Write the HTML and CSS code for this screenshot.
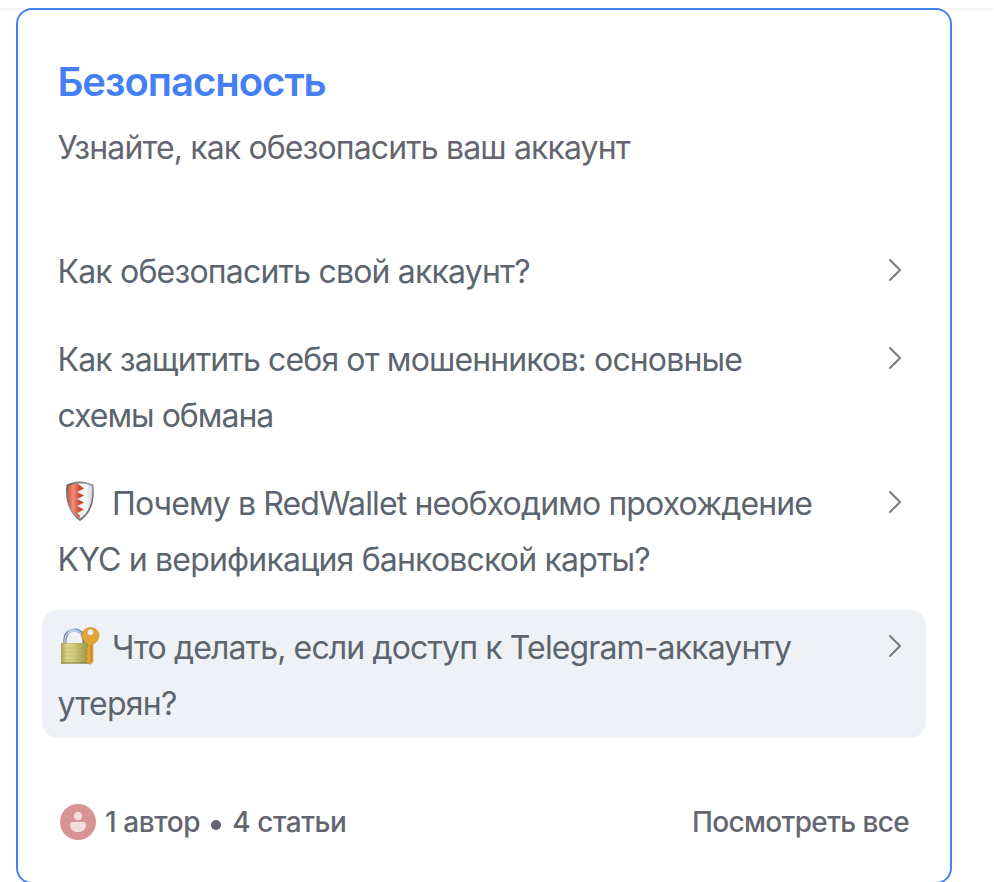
FILE: index.html
```html
<!DOCTYPE html>
<html lang="ru">
<head>
<meta charset="utf-8">
<title>Безопасность</title>
<link rel="stylesheet" href="styles.css">
</head>
<body>
<div class="topbar"></div>
<main class="card">
  <h1 class="title">Безопасность</h1>
  <p class="subtitle">Узнайте, как обезопасить ваш аккаунт</p>
  <ul class="list">
    <li class="item"><span class="label"><span class="line l1">Как обезопасить свой аккаунт?</span></span>
      <svg class="chevron" viewBox="0 0 16 24"><path d="M2 2 12 12 2 22"/></svg></li>
    <li class="item"><span class="label"><span class="line l2">Как защитить себя от мошенников: основные</span> <span class="line l3">схемы обмана</span></span>
      <svg class="chevron" viewBox="0 0 16 24"><path d="M2 2 12 12 2 22"/></svg></li>
    <li class="item"><span class="label"><span class="line"><svg class="emoji" viewBox="0 0 42 42">
        <defs>
          <linearGradient id="rim" x1="0" x2="1" y1="0" y2="1"><stop offset="0" stop-color="#555"/><stop offset=".45" stop-color="#999"/><stop offset="1" stop-color="#555"/></linearGradient>
          <linearGradient id="red" x1="0" x2="1"><stop offset="0" stop-color="#c94830"/><stop offset=".4" stop-color="#ef8e78"/><stop offset=".75" stop-color="#cf4a32"/><stop offset="1" stop-color="#c23a22"/></linearGradient>
          <linearGradient id="silver" x1="0" x2="1"><stop offset="0" stop-color="#cfd4dc"/><stop offset=".55" stop-color="#fafbfd"/><stop offset="1" stop-color="#bcc3cc"/></linearGradient>
          <clipPath id="face"><path d="M22 3.2C18 3.4 13.5 4.4 10 6C9 19 11 31 22 38.7C33 31 35 19 34 6C30.500 4.400 26 3.400 22 3.200Z"/></clipPath>
        </defs>
        <path d="M22 1.500C17 1.700 12.500 2.800 8.500 4.700C7 20 10 33 22 41C34 33 37 20 35.500 4.700C31.500 2.800 27 1.700 22 1.500Z" fill="url(#rim)"/>
        <g clip-path="url(#face)"><path fill="url(#silver)" d="M16 0H37V42H16Z"/><path fill="url(#red)" d="M8 0H22L20 4 26 8.500 19 12 26 15.500 19 19 26 22.500 19 26 26 29.500 19 33 22 36 20 42H8Z"/></g>
      </svg><span class="l4">Почему в RedWallet необходимо прохождение</span></span> <span class="line l5">KYC и верификация банковской карты?</span></span>
      <svg class="chevron" viewBox="0 0 16 24"><path d="M2 2 12 12 2 22"/></svg></li>
    <li class="item active"><span class="label"><span class="line"><svg class="emoji lock" viewBox="0 0 42 42">
        <defs>
          <linearGradient id="brass" x1="0" x2="1"><stop offset="0" stop-color="#a89d52"/><stop offset=".2" stop-color="#d9d58b"/><stop offset=".45" stop-color="#d0ca7b"/><stop offset="1" stop-color="#948b43"/></linearGradient>
          <linearGradient id="steel" x1="0" x2="1"><stop offset="0" stop-color="#74849b"/><stop offset=".3" stop-color="#b4cbe9"/><stop offset=".6" stop-color="#8fa6c8"/><stop offset="1" stop-color="#718097"/></linearGradient>
        </defs>
        <path d="M7 18V13C7 -.3 26 -.3 26 13V18" fill="none" stroke="url(#steel)" stroke-width="3.400"/>
        <path d="M7 17V13C7 1 24 1 25.500 11" fill="none" stroke="#dceafb" stroke-width="1"/>
        <rect x="3" y="16" width="29" height="20.500" rx="1" fill="url(#brass)"/>
        <path d="M3 16.500H32M4 21H31M4 25H31M4 29H31M4 33H31" stroke="#b1aa5c" stroke-width=".4"/>
        <path d="M3 36H32" stroke="#7c763b" stroke-width="1"/>
        <path fill="#dfa535" stroke="#c58b28" stroke-width=".5" fill-rule="evenodd" d="M32.500 .5C27.500 .5 24 4 24 8.500C24 12.500 26.500 15.800 30 17V20L28.500 21.500 30 23 28.500 24.500 30 26 28.500 28V31L30 32 28.500 33.500V35L32 37.500 35 35V17C38.500 15.800 41 12.500 41 8.500C41 4 37.500 .5 32.500 .5ZM32.500 2A3.200 3.200 0 1 1 32.500 8.400A3.200 3.200 0 0 1 32.500 2Z"/>
        <path d="M33.200 18V35" stroke="#b97c1d" stroke-width="1"/>
      </svg><span class="l6">Что делать, если доступ к Telegram-аккаунту</span></span> <span class="line l7">утерян?</span></span>
      <svg class="chevron" viewBox="0 0 16 24"><path d="M2 2 12 12 2 22"/></svg></li>
  </ul>
  <footer class="footer">
    <svg class="avatar" viewBox="0 0 36 36"><circle cx="18" cy="18" r="18" fill="#d89494"/><circle cx="18" cy="12" r="4.200" fill="#f4dddd"/><path d="M12.500 18H23.500Q26 18 26 20.500C26 25.500 22.500 28 18 28S10 25.500 10 20.500Q10 18 12.500 18Z" fill="#f4dddd"/></svg>
    <span class="authors">1 автор</span><span class="dot"></span><span class="count">4 статьи</span>
    <span class="all">Посмотреть все</span>
  </footer>
</main>
</body>
</html>
```

FILE: styles.css
```css
* { box-sizing: border-box; }
body { margin: 0; height: 882px; overflow: hidden; background: #fff; font-family: Inter, sans-serif; color: #64666f; }
.topbar { height: 8px; box-shadow: 0 1px 4px rgba(0, 0, 0, .09); }
.card { width: 936px; height: 876px; margin-left: 16px; padding: 44px 24px 0; border: 2px solid #4482f2; border-radius: 16px; background: #fff; position: relative; }
.title { margin: 0 15.5px; font-size: 40px; line-height: 56px; font-weight: 600; color: #4480f3; white-space: nowrap; letter-spacing: -1px; }
.subtitle { margin: 10px 15.5px 0; font-size: 32px; line-height: 56px; white-space: nowrap; letter-spacing: -.87px; }
.list { list-style: none; margin: 58px 0 0; padding: 0; display: flex; flex-direction: column; gap: 16px; }
.item { display: flex; justify-content: space-between; padding: 10px 22px 6px 15.5px; border-radius: 16px; color: #5c656e; font-size: 32px; line-height: 56px; letter-spacing: -.87px; }
.active { background: #eef1f6; }
.label, .line { display: block; white-space: nowrap; }
.line { display: flex; height: 56px; }
.l1, .l5 { letter-spacing: -.81px; }
.l3 { letter-spacing: -1px; }
.l7 { letter-spacing: -.7px; }
.emoji { width: 42px; height: 42px; margin: 4px 12.5px 0 0; flex: none; }
.lock { margin-top: 7px; }
.chevron { width: 16px; height: 24px; margin-top: 14px; flex: none; fill: none; stroke: #777982; stroke-width: 2; stroke-linecap: round; stroke-linejoin: round; }
.footer { display: flex; align-items: center; height: 40px; margin: 64px 17px 0 18px; font-size: 28px; font-weight: 500; line-height: 40px; white-space: nowrap; letter-spacing: -.65px; }
.avatar { width: 36px; height: 36px; margin-right: 9px; }
.authors { letter-spacing: -.4px; }
.count { letter-spacing: -.45px; }
.dot { width: 10px; height: 10px; margin: 5px 11px 0 11px; border-radius: 50%; background: #64666f; }
.all { margin-left: auto; }
```
